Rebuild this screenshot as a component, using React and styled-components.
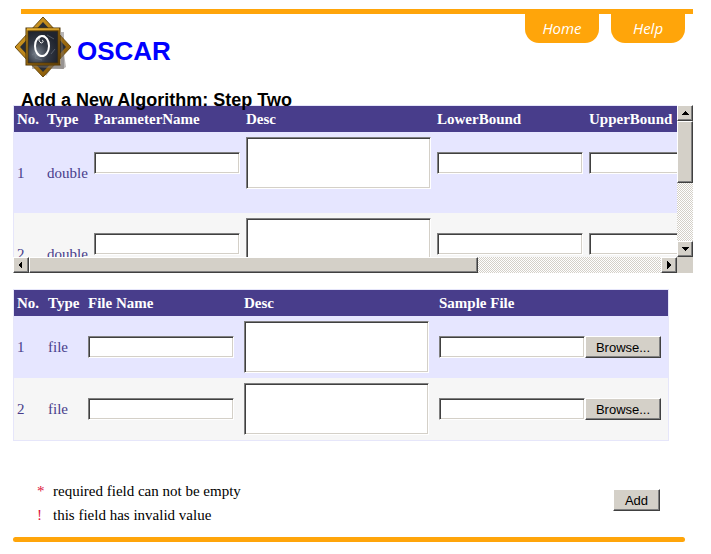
import React, { useRef, useState } from 'react';
import styled, { createGlobalStyle } from 'styled-components';

const PARAMETERS = [
  { no: 1, type: 'double' },
  { no: 2, type: 'double' },
];

const FILES = [
  { no: 1, type: 'file' },
  { no: 2, type: 'file' },
];

const THUMB_Y = 52;
const THUMB_X = 71;

function Logo() {
  return (
    <LogoImage viewBox="0 0 60 60" aria-hidden="true">
      <defs>
        <linearGradient id="gold" x1="0" y1="0" x2="1" y2="1">
          <stop offset="0" stopColor="#e0a92c" />
          <stop offset="0.5" stopColor="#b17a12" />
          <stop offset="1" stopColor="#6b4405" />
        </linearGradient>
        <radialGradient id="stone" cx="0.3" cy="0.7" r="0.7">
          <stop offset="0" stopColor="#7d8691" />
          <stop offset="0.5" stopColor="#343a46" />
          <stop offset="1" stopColor="#20242e" />
        </radialGradient>
      </defs>
      <path d="M46 15H49V52H36L31 59 26 52H17V48H46Z" fill="#b9b6b6" />
      <path d="M28 0 56 30 28 60 0 30Z" fill="url(#gold)" />
      <path d="M28 0 56 30 28 60 0 30Z" fill="none" stroke="#6a4a10" />
      <path d="M28 5 51 30 28 55 5 30Z" fill="#292d35" />
      <path d="M46 16 51 50 48 52 17 50 17 47 46 47Z" fill="#77716d" opacity="0.5" />
      <rect x="11" y="11" width="34" height="37" fill="url(#gold)" stroke="#513604" />
      <path d="M12 12H44" stroke="#f1bc3a" />
      <rect x="13" y="14" width="30" height="32" fill="url(#stone)" stroke="#49320a" />
      <path d="M17 38 23 34 20 41 27 43M32 18 39 22M36 37 40 32" stroke="#747d88" fill="none" opacity="0.6" />
      <ellipse cx="27" cy="29" rx="7" ry="10" fill="none" stroke="#fff" strokeWidth="2" />
      <path d="M30 19C24 18 22 23 26 26C28 26 29 24 27 23" fill="none" stroke="#fff" />
    </LogoImage>
  );
}

function Arrow({ points }) {
  return (
    <ArrowImage viewBox="0 0 8 8" shapeRendering="crispEdges" aria-hidden="true">
      <polygon points={points} />
    </ArrowImage>
  );
}

function ScrollPanel({ children }) {
  const viewport = useRef(null);
  const [position, setPosition] = useState({ x: 0, y: 0 });

  const handleScroll = e => {
    const el = e.currentTarget;
    setPosition({
      x: el.scrollLeft / Math.max(1, el.scrollWidth - el.clientWidth),
      y: el.scrollTop / Math.max(1, el.scrollHeight - el.clientHeight),
    });
  };

  const scrollBy = (left, top) => viewport.current.scrollBy({ left, top });

  return (
    <Panel>
      <Viewport ref={viewport} onScroll={handleScroll}>
        {children}
      </Viewport>
      <ScrollBar $vertical>
        <ScrollButton type="button" aria-label="Scroll up" onClick={() => scrollBy(0, -20)}>
          <Arrow points="0,6 4,2 8,6" />
        </ScrollButton>
        <Track>
          <Thumb
            style={{
              width: '100%',
              height: `${THUMB_Y}%`,
              marginTop: `${position.y * (100 - THUMB_Y)}%`,
            }}
          />
        </Track>
        <ScrollButton type="button" aria-label="Scroll down" onClick={() => scrollBy(0, 20)}>
          <Arrow points="0,2 8,2 4,6" />
        </ScrollButton>
      </ScrollBar>
      <ScrollBar>
        <ScrollButton type="button" aria-label="Scroll left" onClick={() => scrollBy(-40, 0)}>
          <Arrow points="5,0 5,8 1,4" />
        </ScrollButton>
        <Track>
          <Thumb
            style={{
              width: `${THUMB_X}%`,
              height: '100%',
              marginLeft: `${position.x * (100 - THUMB_X)}%`,
            }}
          />
        </Track>
        <ScrollButton type="button" aria-label="Scroll right" onClick={() => scrollBy(40, 0)}>
          <Arrow points="2,0 6,4 2,8" />
        </ScrollButton>
      </ScrollBar>
      <Corner />
    </Panel>
  );
}

function FilePicker({ label }) {
  const picker = useRef(null);
  const [fileName, setFileName] = useState('');

  const handleChange = e => {
    setFileName(e.target.files[0] ? e.target.files[0].name : '');
  };

  return (
    <FileField>
      <TextInput type="text" aria-label={label} value={fileName} readOnly />
      <Button type="button" $width={76} onClick={() => picker.current.click()}>
        Browse...
      </Button>
      <input ref={picker} type="file" aria-label={label} hidden onChange={handleChange} />
    </FileField>
  );
}

function App() {
  return (
    <Page>
      <GlobalStyle />
      <TopBar />
      <Header>
        <Brand>
          <Logo />
          <BrandName>OSCAR</BrandName>
        </Brand>
        <Nav>
          <NavTab href="#home">Home</NavTab>
          <NavTab href="#help">Help</NavTab>
        </Nav>
      </Header>

      <form onSubmit={e => e.preventDefault()}>
        <Title>Add a New Algorithm: Step Two</Title>

        <ScrollPanel>
          <Table $width={933}>
            <colgroup>
              <Col $width={30} />
              <Col $width={47} />
              <Col $width={152} />
              <Col $width={191} />
              <Col $width={152} />
              <Col />
            </colgroup>
            <thead>
              <tr>
                <HeadCell>No.</HeadCell>
                <HeadCell>Type</HeadCell>
                <HeadCell>ParameterName</HeadCell>
                <HeadCell>Desc</HeadCell>
                <HeadCell>LowerBound</HeadCell>
                <HeadCell>UpperBound</HeadCell>
              </tr>
            </thead>
            <tbody>
              {PARAMETERS.map(({ no, type }) => (
                <Row key={no}>
                  <Cell>{no}</Cell>
                  <Cell>{type}</Cell>
                  <FieldCell $note>
                    <TextInput type="text" aria-label={`ParameterName ${no}`} />
                  </FieldCell>
                  <FieldCell $note>
                    <TextArea aria-label={`Desc ${no}`} />
                  </FieldCell>
                  <FieldCell $note>
                    <TextInput type="text" aria-label={`LowerBound ${no}`} />
                  </FieldCell>
                  <FieldCell $note>
                    <TextInput type="text" aria-label={`UpperBound ${no}`} />
                  </FieldCell>
                </Row>
              ))}
            </tbody>
          </Table>
        </ScrollPanel>

        <FileTable $width={656}>
          <colgroup>
            <Col $width={31} />
            <Col $width={40} />
            <Col $width={156} />
            <Col $width={195} />
            <Col />
          </colgroup>
          <thead>
            <tr>
              <HeadCell>No.</HeadCell>
              <HeadCell>Type</HeadCell>
              <HeadCell>File Name</HeadCell>
              <HeadCell>Desc</HeadCell>
              <HeadCell>Sample File</HeadCell>
            </tr>
          </thead>
          <tbody>
            {FILES.map(({ no, type }) => (
              <Row key={no}>
                <Cell>{no}</Cell>
                <Cell>{type}</Cell>
                <FieldCell>
                  <TextInput type="text" aria-label={`File Name ${no}`} />
                </FieldCell>
                <FieldCell>
                  <TextArea aria-label={`File Desc ${no}`} />
                </FieldCell>
                <FieldCell>
                  <FilePicker label={`Sample File ${no}`} />
                </FieldCell>
              </Row>
            ))}
          </tbody>
        </FileTable>

        <FormFooter>
          <Legend>
            <LegendItem>
              <Mark>*</Mark>required field can not be empty
            </LegendItem>
            <LegendItem>
              <Mark>!</Mark>this field has invalid value
            </LegendItem>
          </Legend>
          <AddButton type="submit" $width={47}>
            Add
          </AddButton>
        </FormFooter>
      </form>
      <BottomBar />
    </Page>
  );
}

const GlobalStyle = createGlobalStyle`
  * {
    box-sizing: border-box;
  }

  body {
    margin: 0;
    background-color: #fff;
    color: #000;
    font-family: 'Liberation Serif', serif;
    font-size: 15px;
    line-height: 20px;
  }
`;

const Page = styled.div`
  padding: 9px 18px 12px 13px;
`;

const TopBar = styled.div`
  margin-left: 8px;
  height: 5px;
  background-color: #ffa50a;
`;

const BottomBar = styled.div`
  margin: 10px 8px 0 0;
  height: 5px;
  border-radius: 3px;
  background-color: #ffa50a;
`;

const Header = styled.header`
  display: flex;
  justify-content: space-between;
  align-items: flex-start;
  height: 76px;
`;

const Brand = styled.div`
  display: flex;
  align-items: center;
  gap: 2px;
  padding: 3px 0 0 2px;
`;

const LogoImage = styled.svg`
  width: 60px;
  height: 60px;
`;

const BrandName = styled.h1`
  margin: 0;
  padding-top: 8px;
  color: #00f;
  font-family: 'Liberation Sans', sans-serif;
  font-size: 26px;
  font-weight: bold;
  line-height: 28px;
`;

const Nav = styled.nav`
  display: flex;
  gap: 12px;
  padding-right: 8px;
`;

const NavTab = styled.a`
  width: 74px;
  height: 29px;
  border-radius: 0 0 14px 14px;
  background-color: #ffa50a;
  color: #fff;
  font-family: 'Open Sans', sans-serif;
  font-size: 15px;
  font-style: italic;
  line-height: 28px;
  text-align: center;
  text-decoration: none;
`;

/* the descenders of the title run over the head of the table below */
const Title = styled.h2`
  position: relative;
  z-index: 1;
  margin: 0 0 -5px 8px;
  font-family: 'Liberation Sans', sans-serif;
  font-size: 18px;
  font-weight: bold;
  line-height: 20px;
`;

const Panel = styled.div`
  display: grid;
  grid-template-columns: minmax(0, 1fr) 16px;
  grid-template-rows: 152px 16px;
`;

const Viewport = styled.div`
  overflow: auto;
  scrollbar-width: none;
`;

const ScrollBar = styled.div`
  display: flex;
  flex-direction: ${props => (props.$vertical ? 'column' : 'row')};
`;

const Track = styled.div`
  flex: 1;
  display: flex;
  align-items: flex-start;
  background: repeating-conic-gradient(#fff 0 25%, #d4d0c8 0 50%) 0 0 / 2px 2px;
`;

const Raised = `
  border: 1px solid;
  border-color: #fff #404040 #404040 #fff;
  background-color: #d4d0c8;
  box-shadow: inset -1px -1px 0 #808080;
`;

const Thumb = styled.div`
  ${Raised}
`;

const ScrollButton = styled.button`
  ${Raised}
  display: flex;
  align-items: center;
  justify-content: center;
  padding: 0;
  width: 16px;
  height: 16px;
`;

const ArrowImage = styled.svg`
  width: 8px;
  height: 8px;
`;

const Corner = styled.div`
  background-color: #d4d0c8;
`;

const Table = styled.table`
  width: ${props => props.$width}px;
  border: 1px solid #e6e6fa;
  border-spacing: 0;
  table-layout: fixed;
  color: #483d8b;
`;

const FileTable = styled(Table)`
  margin-top: 16px;
`;

const Col = styled.col`
  width: ${props => (props.$width ? `${props.$width}px` : 'auto')};
`;

const HeadCell = styled.th`
  padding: 3px;
  background-color: #483d8b;
  color: #fff;
  font-weight: bold;
  text-align: left;
  white-space: nowrap;
`;

const Row = styled.tr`
  background-color: #e6e6ff;

  &:nth-child(even) {
    background-color: #f6f6f6;
  }
`;

const Cell = styled.td`
  padding: 3px;
`;

const FieldCell = styled.td`
  padding: 5px 3px ${props => (props.$note ? 24 : 5)}px;
`;

const Sunken = `
  border: 1px solid;
  border-color: #808080 #fff #fff #808080;
  border-radius: 0;
  background-color: #fff;
  box-shadow: inset 1px 1px 0 #404040, inset -1px -1px 0 #d4d0c8;
  font-family: 'Liberation Sans', sans-serif;
  font-size: 13px;
  outline: none;
`;

const TextInput = styled.input`
  ${Sunken}
  display: block;
  padding: 2px 4px;
  width: 146px;
  height: 22px;
`;

const TextArea = styled.textarea`
  ${Sunken}
  display: block;
  padding: 2px 4px;
  width: 185px;
  height: 52px;
  resize: none;
`;

const FileField = styled.div`
  display: flex;
`;

const Button = styled.button`
  ${Raised}
  padding: 0;
  width: ${props => props.$width}px;
  height: 22px;
  color: #000;
  font-family: 'Liberation Sans', sans-serif;
  font-size: 13px;
`;

const FormFooter = styled.div`
  display: flex;
  justify-content: space-between;
  align-items: flex-start;
  margin-top: 38px;
  padding: 0 33px 0 24px;
`;

const Legend = styled.ul`
  margin: 0;
  padding: 0;
  list-style: none;
`;

const LegendItem = styled.li`
  display: flex;
  line-height: 24px;
`;

const Mark = styled.span`
  width: 16px;
  color: #dc143c;
`;

const AddButton = styled(Button)`
  margin-top: 10px;
`;

export default App;
